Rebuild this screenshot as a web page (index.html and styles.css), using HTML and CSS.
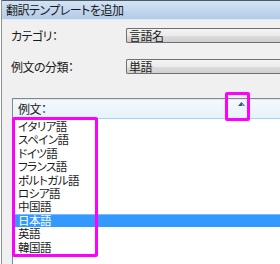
FILE: index.html
```html
<!DOCTYPE html>
<html lang="ja">

<head>
    <meta charset="UTF-8">
    <title>翻訳テンプレートを追加</title>
    <link rel="stylesheet" href="styles.css">
</head>

<body>
    <div class="window">
        <div class="titlebar">翻訳テンプレートを追加</div>

        <div class="form">
            <div class="row">
                <span class="label">カテゴリ：</span>
                <div class="combo">言語名</div>
            </div>
            <div class="row">
                <span class="label">例文の分類：</span>
                <div class="combo">単語</div>
            </div>
        </div>

        <div class="list">
            <div class="list-header">
                <span>例文：</span>
                <svg class="sort-arrow" width="7" height="4" viewBox="0 0 7 4">
                    <path d="M3.5 0 L7 4 L0 4 Z" fill="#2b4f7a" />
                    <path d="M3.5 1 L6 4 L4 4 Z" fill="#8fb8e0" />
                </svg>
            </div>
            <ul class="items">
                <li>イタリア語</li>
                <li>スペイン語</li>
                <li>ドイツ語</li>
                <li>フランス語</li>
                <li>ポルトガル語</li>
                <li>ロシア語</li>
                <li>中国語</li>
                <li class="selected">日本語</li>
                <li>英語</li>
                <li>韓国語</li>
            </ul>
        </div>

        <!-- annotation marks -->
        <div class="mark mark-arrow"></div>
        <div class="mark mark-list"></div>
    </div>
</body>

</html>
```

FILE: styles.css
```css
/* Dialog window */
body {
    margin: 0;
    background-color: #fff;
    font-family: "Noto Sans CJK JP", "DejaVu Sans", sans-serif;
    font-size: 12px;
    line-height: 15px;
    font-feature-settings: "palt";
    letter-spacing: -0.5px;
    color: #1a1a1a;
}

.window {
    position: relative;
    height: 264px;
    overflow: hidden;
    background-color: #f0f0f0;
    border-left: 1px solid #8e8f8f;
    margin-left: 1px;
}

.titlebar {
    height: 18px;
    line-height: 18px;
    padding-left: 4px;
    border-top: 1px solid #4c5966;
    background: linear-gradient(#d3e3f4, #b2cbe8);
    border-bottom: 1px solid #dfe9f5;
    white-space: nowrap;
}

/* Form rows */
.form {
    padding: 8px 0 0 9px;
}

.row {
    display: flex;
    align-items: center;
    height: 15px;
    margin-bottom: 16px;
}

.label {
    width: 115px;
    flex-shrink: 0;
}

.combo {
    flex: 1;
    height: 13px;
    line-height: 13px;
    padding-left: 2px;
    border: 1px solid #707070;
    border-right: none;
    border-radius: 2px 0 0 2px;
    background: linear-gradient(#f3f3f3 0%, #ebebeb 50%, #dddddd 51%, #cfcfcf 100%);
}

/* List view */
.list {
    margin: 24px 0 0 10px;
    border-left: 1px solid #828790;
    border-top: 1px solid #828790;
    background-color: #fff;
    height: 200px;
}

.list-header {
    position: relative;
    height: 18px;
    line-height: 18px;
    padding-left: 5px;
    background: linear-gradient(#f4f9fc, #e6f2fa);
    border-top: 1px solid #e3e8ee;
    border-bottom: 1px solid #96d9f9;
}

.sort-arrow {
    position: absolute;
    left: 225px;
    top: 2px;
}

.items {
    list-style: none;
    margin: 0;
    padding: 1px 0 0 0;
    font-family: "Liberation Sans", "Noto Sans CJK JP", sans-serif;
    font-size: 11.5px;
}

.items li {
    height: 12.4px;
    line-height: 12.4px;
    padding: 1px 0 0 5px;
    white-space: nowrap;
}

.items li.selected {
    background-color: #3399ff;
    border-top: 1px solid #7bbcff;
    padding-top: 0;
    color: #fff;
}

/* Magenta annotation boxes */
.mark {
    position: absolute;
    border: 3px solid #ff00ff;
    border-radius: 2px;
}

.mark-arrow {
    left: 223px;
    top: 92px;
    width: 19px;
    height: 23px;
}

.mark-list {
    left: 10px;
    top: 117px;
    width: 80px;
    height: 134px;
}
```
